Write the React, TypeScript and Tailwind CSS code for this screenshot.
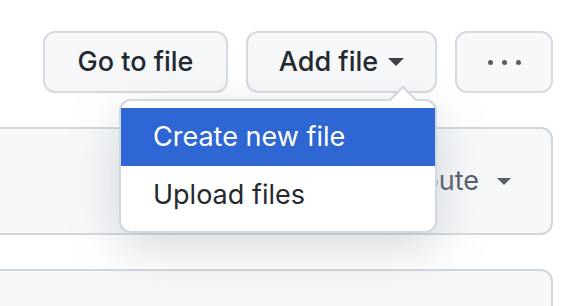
import React from "react";

function Caret({ className }: { className?: string }) {
  return (
    <svg viewBox="0 0 16 8" className={className} aria-hidden="true">
      <path d="M0 0 L16 0 L8 8 Z" fill="currentColor" />
    </svg>
  );
}

export default function App() {
  return (
    <div
      className="relative w-[578px] h-[306px] overflow-hidden bg-white"
      style={{ fontFamily: "Inter, 'Noto Sans', 'Liberation Sans', sans-serif" }}
    >
      {/* Top buttons */}
      <div className="flex justify-end gap-[18px] pt-[31px] pr-[25px]">
        <button className="w-[185px] h-[62px] rounded-[12px] border-2 border-[#d5dae0] bg-[#f6f8fa] text-[27px] font-medium text-[#24292f] flex items-center justify-center">
          Go to file
        </button>
        <button className="w-[191px] h-[62px] rounded-[12px] border-2 border-[#d5dae0] bg-[#f6f8fa] text-[27px] font-medium text-[#24292f] flex items-center justify-center gap-[10px]">
          <span>Add file</span>
          <Caret className="w-[16px] h-[8px] text-[#3b4148]" />
        </button>
        <button className="w-[98px] h-[62px] rounded-[12px] border-2 border-[#d5dae0] bg-[#f6f8fa] flex items-center justify-center gap-[9px]">
          <span className="w-[5px] h-[5px] rounded-full bg-[#57606a]" />
          <span className="w-[5px] h-[5px] rounded-full bg-[#57606a]" />
          <span className="w-[5px] h-[5px] rounded-full bg-[#57606a]" />
        </button>
      </div>

      {/* Contribute box */}
      <div className="mt-[34px] ml-[-20px] mr-[25px] h-[108px] rounded-[12px] border-2 border-[#d0d7de] bg-[#f6f8fa] flex items-center justify-end pr-[40px] gap-[18px]">
        <span className="text-[27px] text-[#57606a]">Contribute</span>
        <Caret className="w-[14px] h-[7px] text-[#57606a]" />
      </div>

      {/* Next box */}
      <div className="mt-[34px] ml-[-20px] mr-[25px] h-[80px] rounded-[12px] border-2 border-[#d0d7de] bg-[#f6f8fa]" />

      {/* Dropdown menu */}
      <div className="absolute left-[119px] top-[99px] w-[318px] rounded-[12px] border-2 border-[#d0d7de] bg-white py-[7px] shadow-[0_16px_48px_rgba(140,149,159,0.35)]">
        {/* pointer */}
        <svg
          className="absolute left-[268px] top-[-16px] w-[28px] h-[16px]"
          viewBox="0 0 28 16"
          aria-hidden="true"
        >
          <path d="M0 16 L14 2 L28 16 Z" fill="white" />
          <path d="M0 16 L14 2 L28 16" fill="none" stroke="#d0d7de" strokeWidth="2" />
        </svg>
        <div className="h-[58px] bg-[#2e67d3] text-white text-[27px] flex items-center pl-[32px]">
          Create new file
        </div>
        <div className="h-[58px] text-[#24292f] text-[27px] flex items-center pl-[32px]">
          Upload files
        </div>
      </div>
    </div>
  );
}
